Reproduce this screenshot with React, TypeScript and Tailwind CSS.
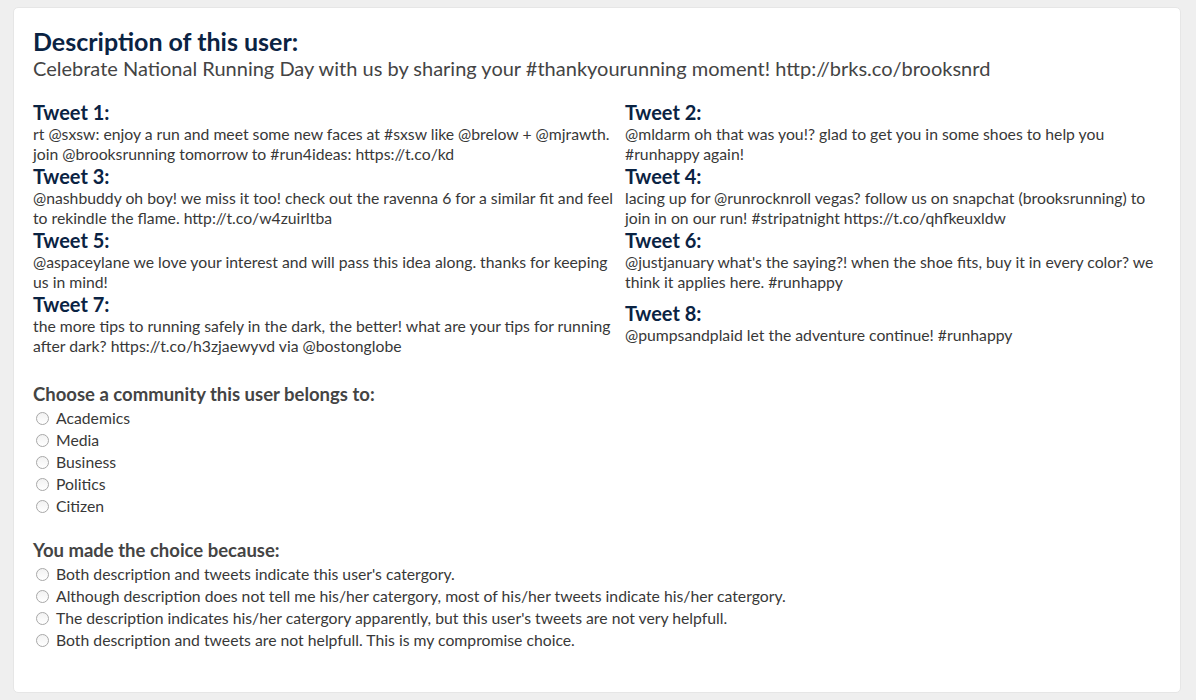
import React from "react";

const tweets: string[] = [
  "rt @sxsw: enjoy a run and meet some new faces at #sxsw like @brelow + @mjrawth. join @brooksrunning tomorrow to #run4ideas: https://t.co/kd",
  "@mldarm oh that was you!? glad to get you in some shoes to help you #runhappy again!",
  "@nashbuddy oh boy! we miss it too! check out the ravenna 6 for a similar fit and feel to rekindle the flame. http://t.co/w4zuirltba",
  "lacing up for @runrocknroll vegas? follow us on snapchat (brooksrunning) to join in on our run! #stripatnight https://t.co/qhfkeuxldw",
  "@aspaceylane we love your interest and will pass this idea along. thanks for keeping us in mind!",
  "@justjanuary what's the saying?! when the shoe fits, buy it in every color? we think it applies here. #runhappy",
  "the more tips to running safely in the dark, the better! what are your tips for running after dark? https://t.co/h3zjaewyvd via @bostonglobe",
  "@pumpsandplaid let the adventure continue! #runhappy",
];

function Tweet({ n, text, extra }: { n: number; text: string; extra?: string }) {
  return (
    <div className={extra}>
      <div className="text-[20px] leading-[24px] font-bold text-[#0a2343]">Tweet {n}:</div>
      <div className="text-[15.75px] leading-[20px] text-[#383838]">{text}</div>
    </div>
  );
}

function Radio({ label }: { label: string }) {
  return (
    <label className="flex items-center h-[22px] text-[15.75px] text-[#383838]">
      <span className="w-[13px] h-[13px] rounded-full border border-[#a8a8a8] bg-gradient-to-b from-[#f2f2f2] to-white ml-[3px] mr-[7px] shrink-0" />
      <span>{label}</span>
    </label>
  );
}

export default function App() {
  const left = [0, 2, 4, 6];
  const right = [1, 3, 5, 7];
  return (
    <div
      className="w-[1196px] h-[700px] bg-[#efefef] pt-[7px] pl-[13px] overflow-hidden"
      style={{ fontFamily: "Lato, 'Noto Sans', sans-serif" }}
    >
      <div className="w-[1168px] h-[686px] bg-white rounded-[5px] border border-[#e6e6e6] px-[19px] pt-[18px]">
        <div className="text-[25px] leading-[30px] font-bold text-[#0a2343]">Description of this user:</div>
        <div className="text-[20px] leading-[24px] text-[#444]">
          Celebrate National Running Day with us by sharing your #thankyourunning moment! http://brks.co/brooksnrd
        </div>
        <div className="grid grid-cols-[592px_1fr] mt-[20px]">
          <div>
            {left.map((i) => (
              <Tweet key={i} n={i + 1} text={tweets[i]} />
            ))}
          </div>
          <div>
            {right.map((i) => (
              <Tweet key={i} n={i + 1} text={tweets[i]} extra={i === 7 ? "mt-[9px]" : undefined} />
            ))}
          </div>
        </div>
        <div className="mt-[26px] text-[18.5px] leading-[24px] font-bold text-[#444]">Choose a community this user belongs to:</div>
        <div className="mt-[1px]">
          {["Academics", "Media", "Business", "Politics", "Citizen"].map((l) => (
            <Radio key={l} label={l} />
          ))}
        </div>
        <div className="mt-[21px] text-[18.5px] leading-[24px] font-bold text-[#444]">You made the choice because:</div>
        <div className="mt-[1px]">
          {[
            "Both description and tweets indicate this user's catergory.",
            "Although description does not tell me his/her catergory, most of his/her tweets indicate his/her catergory.",
            "The description indicates his/her catergory apparently, but this user's tweets are not very helpfull.",
            "Both description and tweets are not helpfull. This is my compromise choice.",
          ].map((l) => (
            <Radio key={l} label={l} />
          ))}
        </div>
      </div>
    </div>
  );
}
